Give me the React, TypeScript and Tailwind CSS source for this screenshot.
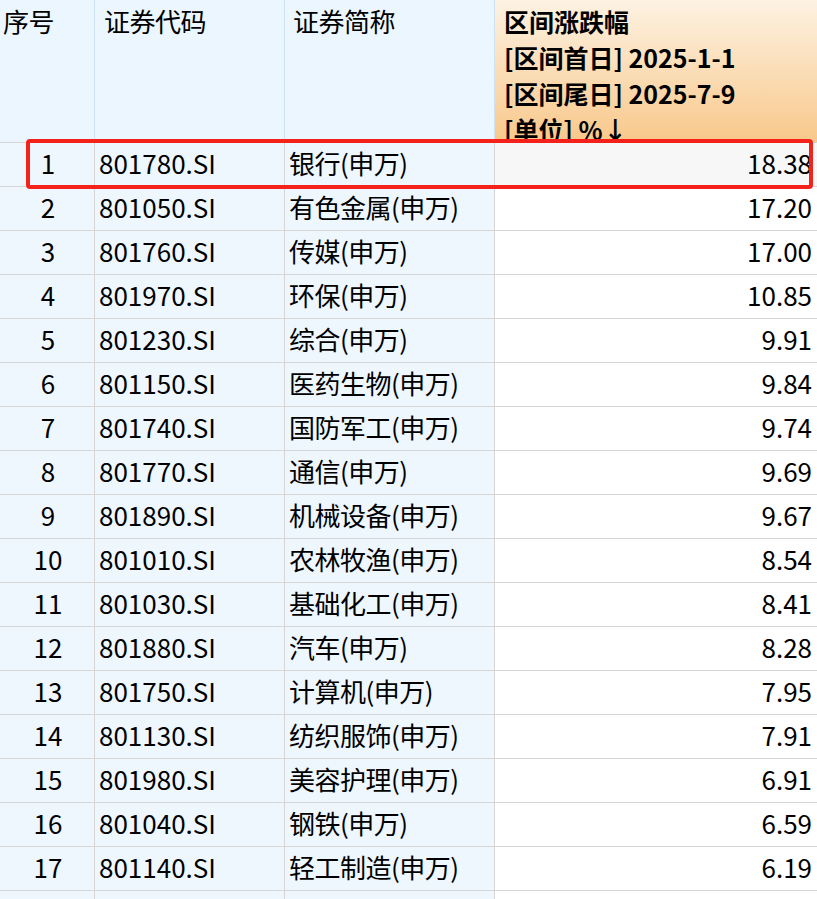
const rows: [string, string, string][] = [
  ["801780.SI", "银行(申万)", "18.38"],
  ["801050.SI", "有色金属(申万)", "17.20"],
  ["801760.SI", "传媒(申万)", "17.00"],
  ["801970.SI", "环保(申万)", "10.85"],
  ["801230.SI", "综合(申万)", "9.91"],
  ["801150.SI", "医药生物(申万)", "9.84"],
  ["801740.SI", "国防军工(申万)", "9.74"],
  ["801770.SI", "通信(申万)", "9.69"],
  ["801890.SI", "机械设备(申万)", "9.67"],
  ["801010.SI", "农林牧渔(申万)", "8.54"],
  ["801030.SI", "基础化工(申万)", "8.41"],
  ["801880.SI", "汽车(申万)", "8.28"],
  ["801750.SI", "计算机(申万)", "7.95"],
  ["801130.SI", "纺织服饰(申万)", "7.91"],
  ["801980.SI", "美容护理(申万)", "6.91"],
  ["801040.SI", "钢铁(申万)", "6.59"],
  ["801140.SI", "轻工制造(申万)", "6.19"],
  ["", "", ""],
];

export default function App() {
  const font = { fontFamily: '"Noto Sans CJK SC", "Liberation Sans", sans-serif' };
  return (
    <div className="relative w-[817px] h-[899px] overflow-hidden bg-white text-[26px] text-black" style={font}>
      <div className="grid grid-cols-[95px_190px_210px_322px] h-[143px] border-b border-[#d6d6d6]">
        <div className="bg-[#ecf6fe] border-r border-[#cfe2f5] pl-[3px] pt-[3px] leading-[35px] tracking-[-0.5px]">序号</div>
        <div className="bg-[#ecf6fe] border-r border-[#cfe2f5] pl-[9px] pt-[3px] leading-[35px] tracking-[-0.5px]">证券代码</div>
        <div className="bg-[#ecf6fe] border-r border-[#cfe2f5] pl-[8px] pt-[3px] leading-[35px] tracking-[-0.5px]">证券简称</div>
        <div className="bg-gradient-to-b from-[#fdf2e2] to-[#f8c88a] pl-[9px] pt-[3px] leading-[36px] font-bold overflow-hidden text-[25px]">
          <div>区间涨跌幅</div>
          <div>[区间首日] 2025-1-1</div>
          <div>[区间尾日] 2025-7-9</div>
          <div>[单位] %↓</div>
        </div>
      </div>
      {rows.map((r, i) => (
        <div key={i} className="grid grid-cols-[95px_190px_210px_322px] h-[44px] border-b border-[#d6d6d6] leading-[40px]">
          <div className="bg-[#eef6fe] border-r border-[#d6d6d6] text-center pl-[2px]">{r[0] ? i + 1 : ""}</div>
          <div className="bg-[#eef6fe] border-r border-[#d6d6d6] pl-[4px]">{r[0]}</div>
          <div className="bg-[#eef6fe] border-r border-[#d6d6d6] pl-[4px] tracking-[-0.5px]">{r[1]}</div>
          <div className={`${i === 0 ? "bg-[#f7f7f7]" : "bg-white"} text-right pr-[5px]`}>{r[2]}</div>
        </div>
      ))}
      <div className="absolute left-[26px] top-[139px] w-[787px] h-[50px] border-[4px] border-[#f5211b] rounded-[4px]" />
    </div>
  );
}
